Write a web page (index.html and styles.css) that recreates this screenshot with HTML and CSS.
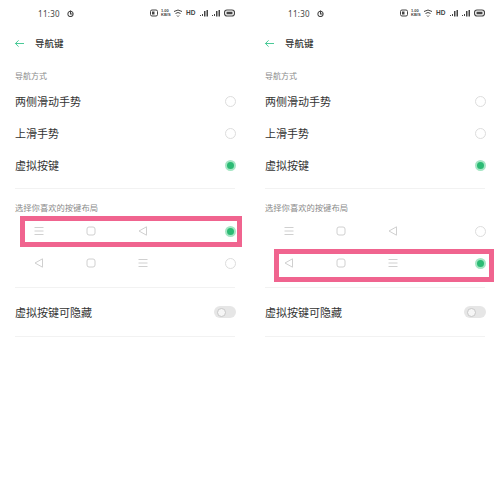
FILE: index.html
```html
<!DOCTYPE html>
<html lang="zh-CN">
<head>
    <meta charset="UTF-8">
    <meta name="viewport" content="width=device-width, initial-scale=1.0">
    <title>导航键</title>
    <link rel="stylesheet" href="styles.css">
</head>
<body>
    <svg class="icon-defs" width="0" height="0">
        <symbol id="icon-menu" viewBox="0 0 12 12">
            <path d="M1.5 2.5h9M1.5 6h9M1.5 9.500h9" fill="none" stroke="currentColor" stroke-width="1"/>
        </symbol>
        <symbol id="icon-home" viewBox="0 0 12 12">
            <rect x="2" y="2" width="8" height="8" rx="2" fill="none" stroke="currentColor" stroke-width="1"/>
        </symbol>
        <symbol id="icon-back" viewBox="0 0 12 12">
            <path d="M9.500 1.800v8.400L2 6z" fill="none" stroke="currentColor" stroke-width="1" stroke-linejoin="round"/>
        </symbol>
        <symbol id="icon-nfc" viewBox="0 0 8 8">
            <rect x="0.500" y="1" width="7" height="6" rx="1.500" fill="none" stroke="currentColor" stroke-width="1"/>
            <path d="M2 2.500h2.500v3H2z" fill="currentColor"/>
        </symbol>
        <symbol id="icon-wifi" viewBox="0 0 8 8">
            <path d="M0 2.500q4-3 8 0M1.500 4.500q2.500-2 5 0M3 6.500l1 1 1-1" fill="none" stroke="currentColor" stroke-width="1"/>
        </symbol>
        <symbol id="icon-signal" viewBox="0 0 9 8">
            <path d="M0 7h1V6H0zM2 7h1V5H2zM4 7.500h1.500V2H4zM6.500 7.500H8V1H6.500z" fill="currentColor"/>
        </symbol>
        <symbol id="icon-battery" viewBox="0 0 11 8">
            <rect x="0.500" y="1" width="10" height="6" rx="2.500" fill="none" stroke="currentColor" stroke-width="1.200"/>
            <path d="M2.500 2.700H8.500v2.600H2.500z" fill="currentColor"/>
        </symbol>
        <symbol id="icon-alarm" viewBox="0 0 8 8">
            <circle cx="4" cy="4.500" r="3" fill="none" stroke="currentColor" stroke-width="1.200"/>
            <path d="M4 0.500v4h2.500" fill="none" stroke="currentColor" stroke-width="1.200"/>
        </symbol>
    </svg>

    <section class="phone">
        <div class="status-bar">
            <span class="status-time">11:30</span>
            <svg class="status-alarm"><use href="#icon-alarm"/></svg>
            <div class="status-icons">
                <svg class="status-nfc"><use href="#icon-nfc"/></svg>
                <span class="status-speed">1.00<br>KB/S</span>
                <svg class="status-wifi"><use href="#icon-wifi"/></svg>
                <span class="status-hd">HD</span>
                <svg class="status-signal"><use href="#icon-signal"/></svg>
                <svg class="status-signal"><use href="#icon-signal"/></svg>
                <svg class="status-battery"><use href="#icon-battery"/></svg>
            </div>
        </div>
        <header class="title-bar">
            <svg class="back-arrow" viewBox="0 0 12 10"><path d="M11 5H1.500M5 1.500 1.500 5 5 8.500" fill="none" stroke="currentColor" stroke-width="1"/></svg>
            <h1>导航键</h1>
        </header>
        <p class="group-label">导航方式</p>
        <div class="row"><span>两侧滑动手势</span><i class="radio"></i></div>
        <div class="row"><span>上滑手势</span><i class="radio"></i></div>
        <div class="row"><span>虚拟按键</span><i class="radio checked"></i></div>
        <div class="divider divider-first"></div>
        <p class="group-label group-label-keys">选择你喜欢的按键布局</p>
        <div class="key-row">
            <svg class="key"><use href="#icon-menu"/></svg>
            <svg class="key"><use href="#icon-home"/></svg>
            <svg class="key"><use href="#icon-back"/></svg>
            <i class="radio checked"></i>
        </div>
        <div class="key-row">
            <svg class="key"><use href="#icon-back"/></svg>
            <svg class="key"><use href="#icon-home"/></svg>
            <svg class="key"><use href="#icon-menu"/></svg>
            <i class="radio"></i>
        </div>
        <div class="divider divider-second"></div>
        <div class="row row-toggle"><span>虚拟按键可隐藏</span><i class="toggle"></i></div>
        <div class="divider"></div>
        <div class="highlight highlight-top"></div>
    </section>

    <section class="phone">
        <div class="status-bar">
            <span class="status-time">11:30</span>
            <svg class="status-alarm"><use href="#icon-alarm"/></svg>
            <div class="status-icons">
                <svg class="status-nfc"><use href="#icon-nfc"/></svg>
                <span class="status-speed">1.00<br>KB/S</span>
                <svg class="status-wifi"><use href="#icon-wifi"/></svg>
                <span class="status-hd">HD</span>
                <svg class="status-signal"><use href="#icon-signal"/></svg>
                <svg class="status-signal"><use href="#icon-signal"/></svg>
                <svg class="status-battery"><use href="#icon-battery"/></svg>
            </div>
        </div>
        <header class="title-bar">
            <svg class="back-arrow" viewBox="0 0 12 10"><path d="M11 5H1.500M5 1.500 1.500 5 5 8.500" fill="none" stroke="currentColor" stroke-width="1"/></svg>
            <h1>导航键</h1>
        </header>
        <p class="group-label">导航方式</p>
        <div class="row"><span>两侧滑动手势</span><i class="radio"></i></div>
        <div class="row"><span>上滑手势</span><i class="radio"></i></div>
        <div class="row"><span>虚拟按键</span><i class="radio checked"></i></div>
        <div class="divider divider-first"></div>
        <p class="group-label group-label-keys">选择你喜欢的按键布局</p>
        <div class="key-row">
            <svg class="key"><use href="#icon-menu"/></svg>
            <svg class="key"><use href="#icon-home"/></svg>
            <svg class="key"><use href="#icon-back"/></svg>
            <i class="radio"></i>
        </div>
        <div class="key-row">
            <svg class="key"><use href="#icon-back"/></svg>
            <svg class="key"><use href="#icon-home"/></svg>
            <svg class="key"><use href="#icon-menu"/></svg>
            <i class="radio checked"></i>
        </div>
        <div class="divider divider-second"></div>
        <div class="row row-toggle"><span>虚拟按键可隐藏</span><i class="toggle"></i></div>
        <div class="divider"></div>
        <div class="highlight highlight-bottom"></div>
    </section>
</body>
</html>
```

FILE: styles.css
```css
* {
    margin: 0;
    padding: 0;
    box-sizing: border-box;
}

body {
    display: flex;
    width: 500px;
    height: 484px;
    overflow: hidden;
    background: #ffffff;
    color: #333333;
    font-family: "Noto Sans CJK SC", "Noto Sans", sans-serif;
}

.icon-defs {
    position: absolute;
}

.phone {
    position: relative;
    width: 250px;
    height: 484px;
}

.status-bar {
    display: flex;
    align-items: center;
    height: 26px;
    padding: 0 15px 0 38px;
    color: #444444;
}

.status-time {
    font-family: "Noto Sans", sans-serif;
    font-size: 8px;
    letter-spacing: 0.3px;
}

.status-alarm {
    width: 7px;
    height: 7px;
    margin-left: 7px;
}

.status-icons {
    display: flex;
    align-items: center;
    gap: 3px;
    margin-left: auto;
}

.status-nfc,
.status-wifi {
    width: 8px;
    height: 8px;
}

.status-signal {
    width: 9px;
    height: 8px;
}

.status-battery {
    width: 11px;
    height: 8px;
}

.status-speed {
    width: 10px;
    font-family: "Liberation Sans", sans-serif;
    font-size: 4px;
    font-weight: bold;
    line-height: 4px;
}

.status-hd {
    width: 10px;
    margin: 0 1px;
    font-family: "Liberation Sans", sans-serif;
    font-size: 6.500px;
    font-weight: bold;
    line-height: 8px;
}

.title-bar {
    display: flex;
    align-items: center;
    height: 26px;
    margin-top: 4px;
    padding-left: 14px;
}

.back-arrow {
    width: 11px;
    height: 9px;
    color: #36c48c;
}

.title-bar h1 {
    margin-left: 10px;
    font-size: 9.500px;
    font-weight: 500;
}

.group-label {
    height: 19px;
    margin-top: 10px;
    padding-left: 15px;
    color: #8a8a8a;
    font-size: 8px;
    line-height: 19px;
}

.group-label-keys {
    height: 16px;
    font-size: 8.300px;
    line-height: 16px;
}

.row {
    display: flex;
    align-items: center;
    justify-content: space-between;
    height: 32px;
    padding: 0 14.500px 0 15px;
    font-size: 11px;
}

.row-toggle {
    height: 48px;
}

.radio {
    display: block;
    width: 11px;
    height: 11px;
    border: 1.500px solid #dddddd;
    border-radius: 50%;
}

.radio.checked {
    border: 2px solid #a5e6c4;
    background: #2cbb74;
}

.toggle {
    display: flex;
    align-items: center;
    width: 22px;
    height: 12px;
    padding-left: 3px;
    border-radius: 6px;
    background: #e6e6e6;
}

.toggle::after {
    content: '';
    width: 7px;
    height: 7px;
    border: 1.500px solid #c8c8c8;
    border-radius: 50%;
    background: #f6f6f6;
}

.divider {
    height: 1px;
    margin: 0 15px;
    background: #f2f2f2;
}

.divider-first {
    margin-top: 7px;
}

.divider-second {
    margin-top: 8px;
}

.key-row {
    display: grid;
    grid-template-columns: repeat(3, 52px) 1fr;
    align-items: center;
    justify-items: center;
    height: 32px;
    padding: 0 14.500px 0 13px;
    color: #d0d0d0;
}

.key {
    width: 12px;
    height: 12px;
}

.key-row .radio {
    justify-self: end;
}

/* pink call-out frames drawn over the key rows */
.highlight {
    position: absolute;
    border: 5px solid #f0648f;
}

.highlight-top {
    top: 216px;
    left: 20px;
    width: 222px;
    height: 31px;
}

.highlight-bottom {
    top: 249px;
    left: 24px;
    width: 220px;
    height: 33px;
}
```
